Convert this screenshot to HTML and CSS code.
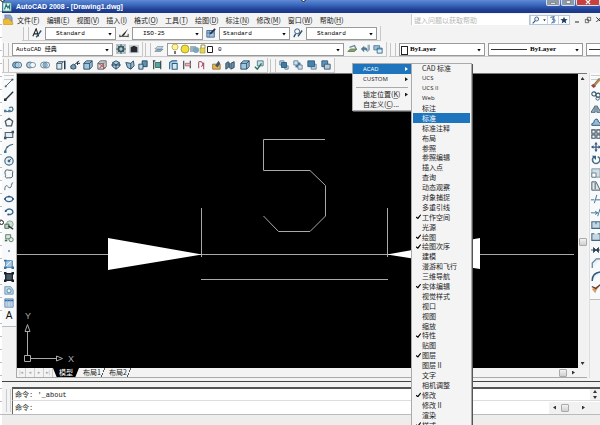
FILE: index.html
```
<!DOCTYPE html>
<html lang="zh-CN">
<head>
<meta charset="utf-8">
<title>AutoCAD 2008 - [Drawing1.dwg]</title>
<link rel="stylesheet" href="styles.css">
</head>
<body>
<svg class="defs" aria-hidden="true">
  <symbol id="grad" viewBox="0 0 12 12"><path d="M1 1h7v7H1z" fill="#5d94bd" stroke="#26516f"/><path d="M4 5h7v6H4z" fill="#b9c9d4" stroke="#26516f"/></symbol>
  <symbol id="cube" viewBox="0 0 12 12"><path d="M1 4l3-3h7v7l-3 3H1z" fill="#9fc6df" stroke="#1d3c55"/><path d="M1 4h7v7M8 4l3-3" fill="none" stroke="#1d3c55"/></symbol>
  <symbol id="hexcube" viewBox="0 0 12 12"><path d="M6 1l4 2v5l-4 3-4-3V3z" fill="#a9cbe0" stroke="#1d3c55"/><path d="M2 3l4 3 4-3M6 6v5M0 6h12" fill="none" stroke="#1d3c55"/></symbol>
  <symbol id="layers" viewBox="0 0 12 12"><path d="M1 9l3-3h7l-3 3z" fill="#8fa8ba" stroke="#587387" stroke-width=".6"/><path d="M1 6l3-3h7l-3 3z" fill="#c4d6e2" stroke="#587387" stroke-width=".6"/></symbol>
  <symbol id="rings" viewBox="0 0 12 12"><rect x=".7" y="2.5" width="8" height="7" rx="3.5" fill="#8db9d5" stroke="#315a78"/><rect x="3.5" y="2.5" width="8" height="7" rx="3.5" fill="#c1dcec" fill-opacity=".6" stroke="#315a78"/></symbol>
</svg>

<div class="app">
  <header class="title">
    <svg class="icon" viewBox="0 0 12 12"><path d="M1 1h10v10H1z" fill="#e9f3ef" stroke="#3d8a83"/><path d="M3 9l2-6 2 4 2-3v5" fill="none" stroke="#217a72" stroke-width="1.4"/></svg>
    <h1>AutoCAD 2008 - [Drawing1.dwg]</h1>
    <div class="wbtns">
      <button aria-label="最小化"><svg viewBox="0 0 12 6"><path d="M3 3h6v2H3z" fill="#fff" stroke="#555" stroke-width=".6"/></svg></button>
      <button aria-label="还原"><svg viewBox="0 0 12 6"><path d="M4 1h5v3H4z" fill="#fff" stroke="#555" stroke-width=".6"/></svg></button>
      <button class="close" aria-label="关闭"><svg viewBox="0 0 12 6"><path d="M3.500 0l5 5M8.500 0l-5 5" stroke="#fff" stroke-width="1.500"/></svg></button>
    </div>
  </header>

  <div class="menubar">
    <svg class="icon" viewBox="0 0 12 12"><path d="M2 1h6l2 3v5H2z" fill="#8ba5ca" stroke="#52719c" stroke-width=".6"/><path d="M0 6l6-1 5 5-1 2H1z" fill="#edbb35" stroke="#c08b1d" stroke-width=".6"/></svg>
    <nav>
      <a href="#">文件(<u>F</u>)</a><a href="#">编辑(<u>E</u>)</a><a href="#">视图(<u>V</u>)</a><a href="#">插入(<u>I</u>)</a><a href="#">格式(<u>O</u>)</a><a href="#">工具(<u>T</u>)</a><a href="#">绘图(<u>D</u>)</a><a href="#">标注(<u>N</u>)</a><a href="#">修改(<u>M</u>)</a><a href="#">窗口(<u>W</u>)</a><a href="#">帮助(<u>H</u>)</a>
    </nav>
    <input class="ask" type="text" placeholder="键入问题以获取帮助" aria-label="键入问题以获取帮助">
    <div class="help">
      <button aria-label="搜索"><svg viewBox="0 0 12 12"><circle cx="7" cy="4.500" r="3" fill="#e0edf8" stroke="#2d557f" stroke-width="1.200"/><path d="M5 7l-4 4" stroke="#2d557f" stroke-width="1.800"/></svg></button>
      <button class="thin" aria-label="搜索选项"><svg viewBox="0 0 6 12"><path d="M1 5h4L3 8z" fill="#333"/></svg></button>
      <button aria-label="通讯中心"><svg viewBox="0 0 12 12"><path d="M2 2l6-1-3 4 3 1-4 5" fill="none" stroke="#34608f" stroke-width="1.500"/><path d="M7 3q4 3 1 7H4" fill="none" stroke="#5d87af" stroke-width="1.500"/></svg></button>
      <button aria-label="收藏夹"><svg viewBox="0 0 12 12"><path d="M6 1l1.500 3.500 4 .2-3 2.500 1 4L6 9l-3.500 2.200 1-4-3-2.500 4-.2z" fill="#1e3f69"/></svg></button>
    </div>
    <div class="docbtns">
      <button aria-label="最小化图形"><svg viewBox="0 0 12 12"><path d="M3 9h6" stroke="#333" stroke-width="1.600"/></svg></button>
      <button aria-label="还原图形"><svg viewBox="0 0 12 12"><path d="M5 2h5v5H5zM2 5h5v5H2z" fill="#f4f4f4" stroke="#333"/></svg></button>
      <button aria-label="关闭图形"><svg viewBox="0 0 12 12"><path d="M2 2l7 7M9 2L2 9" stroke="#333" stroke-width="1.500"/></svg></button>
    </div>
  </div>

  <div class="row row1">
    <div class="bar styles-bar">
      <button class="ib" aria-label="文字样式"><svg viewBox="0 0 12 12"><path d="M1 10l4-9 3 9M2.500 7H7" fill="none" stroke="#222" stroke-width="1.300"/><path d="M11 3L6 10l-1 1" stroke="#2d5873" stroke-width="1.800"/></svg></button>
      <span class="combo w-a"><select aria-label="文字样式"><option>Standard</option></select></span>
      <button class="ib" aria-label="标注样式"><svg viewBox="0 0 12 12"><path d="M1 10h10M1 8v3M11 7v4" stroke="#222"/><path d="M11 1L4 8l-1 2 3-1z" fill="#222"/></svg></button>
      <span class="combo w-a"><select aria-label="标注样式"><option>ISO-25</option></select></span>
      <button class="ib" aria-label="表格样式"><svg viewBox="0 0 12 12"><path d="M1 3h9v8H1z" fill="#a6c3df" stroke="#365f91"/><path d="M1 6h9M4 3v8" stroke="#365f91" stroke-width=".7"/><path d="M11 1L5 7" stroke="#1f3244" stroke-width="2"/></svg></button>
      <span class="combo w-a near"><select aria-label="表格样式"><option>Standard</option></select></span>
      <button class="ib" aria-label="多重引线样式"><svg viewBox="0 0 12 12"><circle cx="5" cy="4" r="3" fill="none" stroke="#365f82" stroke-width="1.200"/><path d="M3 7l-2 4M11 3L6 10" stroke="#294c68" stroke-width="1.600"/></svg></button>
      <span class="combo w-a"><select aria-label="多重引线样式"><option>Standard</option></select></span>
    </div>
  </div>

  <div class="row row2">
    <div class="bar workspace">
      <span class="combo w-w near"><select aria-label="工作空间"><option>AutoCAD 经典</option></select></span>
      <button class="ib" aria-label="工作空间设置"><svg viewBox="0 0 12 12"><path d="M0 0h12v12H0z" fill="#b6c6ca"/><circle cx="6" cy="6" r="3" fill="none" stroke="#36545e" stroke-width="2"/><path d="M6 0v3M6 9v3M0 6h3M9 6h3M2 2l2 2M8 8l2 2M10 2L8 4M4 8l-2 2" stroke="#36545e"/></svg></button>
      <button class="ib" aria-label="我的工作空间"><svg viewBox="0 0 12 12"><path d="M0 1h12v10H0z" fill="#ccd1d4"/><path d="M2 4l4-2 4 2v6H2z" fill="#252b33"/></svg></button>
    </div>
    <div class="bar layerbar">
      <button class="ib" aria-label="图层特性管理器"><svg><use href="#layers"/></svg></button>
      <span class="combo w-l">
        <svg class="lstate" viewBox="0 0 44 12"><circle cx="5" cy="4" r="3" fill="#fff49a" stroke="#ad9c34" stroke-width=".7"/><path d="M4 8h2v3H4z" fill="#777"/><circle cx="15" cy="6" r="4" fill="#f1de3c" stroke="#99912d" stroke-width=".8"/><path d="M20 3h6v6h-6z" fill="#a1b3b9"/><circle cx="26" cy="7" r="3" fill="#78a6bf"/><path d="M31 5V2h4v3" fill="none" stroke="#928f3e"/><path d="M30 5h5v5h-5z" fill="#e8d44b" stroke="#928f3e" stroke-width=".6"/><path d="M37.500 3.500h5v6h-5z" fill="#fff" stroke="#222"/></svg>
        <select aria-label="图层"><option>0</option></select></span>
      <button class="ib" aria-label="置为当前图层"><svg viewBox="0 0 12 12"><path d="M1 9l3-3h8l-3 3z" fill="#84a566" stroke="#637b55"/><path d="M3 4l6-2 2 4" fill="none" stroke="#6b8b98" stroke-width="1.600"/></svg></button>
      <button class="ib" aria-label="上一个图层"><svg viewBox="0 0 12 12"><path d="M5 2L1 6l4 4V7q3 0 4 3 1-6-4-6z" fill="#517b98"/><path d="M9 1v9l3-3V1z" fill="#9eafb9"/></svg></button>
      <button class="ib" aria-label="图层状态管理器"><svg viewBox="0 0 12 12"><path d="M1 2h7v5H1z" fill="#9bc2db" stroke="#447391"/><path d="M5 5h6v6H5z" fill="#deedf5" stroke="#286389"/><path d="M5 6h6" stroke="#286389"/></svg></button>
    </div>
    <div class="bar props">
      <span class="combo w-c swatch"><select aria-label="颜色"><option>ByLayer</option></select></span>
      <span class="combo w-t line"><select aria-label="线型"><option>ByLayer</option></select></span>
      <span class="combo w-x line"><select aria-label="线宽"><option></option></select></span>
    </div>
  </div>

  <div class="row row3">
    <div class="bar">
      <div class="grp g3">
        <button class="ib" aria-label="并集"><svg><use href="#rings"/></svg></button>
        <button class="ib" aria-label="差集"><svg viewBox="0 0 12 12"><rect x=".7" y="2.500" width="8" height="7" rx="3.500" fill="#b1d3e7" stroke="#315a78"/><rect x="4.500" y="3" width="7" height="6" rx="3" fill="#f5f5f5" stroke="#6c879a"/></svg></button>
        <button class="ib" aria-label="交集"><svg viewBox="0 0 12 12"><rect x=".7" y="2.500" width="8" height="7" rx="3.500" fill="none" stroke="#55758b"/><rect x="3.500" y="2.500" width="8" height="7" rx="3.500" fill="none" stroke="#55758b"/><ellipse cx="6" cy="6" rx="2" ry="3" fill="#75abd0"/></svg></button>
      </div>
      <div class="grp g8">
        <button class="ib" aria-label="拉伸面"><svg viewBox="0 0 12 12"><path d="M1 4h6v7H1zM1 4l2-2h6L7 4" fill="#d6e5ee" stroke="#1d3c55"/><path d="M10.500 1v10" stroke="#1d3c55" stroke-width="1.800"/></svg></button>
        <button class="ib" aria-label="移动面"><svg viewBox="0 0 12 12"><path d="M1 7l3-2 3 2v3l-3 1-3-1z" fill="#789db5" stroke="#1d3c55"/><path d="M5 6l6-5M8 4h4M9 2v4" stroke="#263846" stroke-width="1.200"/></svg></button>
        <button class="ib" aria-label="偏移面"><svg><use href="#cube"/></svg></button>
        <button class="ib" aria-label="删除面"><svg viewBox="0 0 12 12"><path d="M1 4l3-3h7v7l-3 3H1zM1 4h7v7" fill="#dbd9dc" stroke="#3f4f5e"/><path d="M2 4l8 6M9 3l-6 7" stroke="#c05b57" stroke-width="1.300"/></svg></button>
        <button class="ib" aria-label="旋转面"><svg><use href="#hexcube"/></svg></button>
        <button class="ib" aria-label="倾斜面"><svg viewBox="0 0 12 12"><path d="M1 3l6 1v7L3 9zM7 4l3-3 1 6-4 4" fill="#97bcd4" stroke="#1d3c55"/></svg></button>
        <button class="ib" aria-label="复制面"><svg viewBox="0 0 12 12"><path d="M5 1h6v7H5z" fill="#618faf" stroke="#1d3c55"/><path d="M1 5h5v6H1z" fill="#b8d8e9" stroke="#1d3c55"/></svg></button>
        <button class="ib" aria-label="着色面"><svg viewBox="0 0 12 12"><path d="M4 3h6v6H4z" fill="#54a69a" stroke="#296260"/><path d="M2 1v10M1 1h3M10.500 1v10" stroke="#303e42" stroke-width="1.300"/></svg></button>
      </div>
      <div class="grp g7">
        <button class="ib" aria-label="复制边"><svg viewBox="0 0 12 12"><path d="M2 11V3l3-2h6M5 4h6v7H5z" fill="#d8e7f0" stroke="#246189" stroke-width="1.300"/></svg></button>
        <button class="ib" aria-label="着色边"><svg viewBox="0 0 12 12"><path d="M2 1v10M10 1v9" stroke="#485961" stroke-width="1.500"/><path d="M4 4h6v3H4z" fill="#edb7bd" stroke="#a2636b"/></svg></button>
        <button class="ib" aria-label="压印"><svg viewBox="0 0 12 12"><path d="M2 10V4q0-3 3-2 4 3 0 6M8 3v8" fill="none" stroke="#a2526a" stroke-width="1.300"/></svg></button>
        <button class="ib" aria-label="清除"><svg viewBox="0 0 12 12"><path d="M2 5h9v6H2z" fill="#e6b556" stroke="#8b6a31"/><path d="M5 7L9 1l2 3-3 5z" fill="#42576a"/></svg></button>
        <button class="ib" aria-label="分割"><svg viewBox="0 0 12 12"><path d="M1 4l3-2v7l-3 2zM7 4l4-2v7l-4 2z" fill="#6b8da5" stroke="#1d3c55"/><path d="M5.500 3v7" stroke="#1d3c55"/></svg></button>
        <button class="ib" aria-label="抽壳"><svg><use href="#cube"/></svg></button>
        <button class="ib" aria-label="选中"><svg viewBox="0 0 12 12"><path d="M4 1h7v6H4z" fill="#c8dfeb" stroke="#427285"/><path d="M1 8l3 3 5-7" fill="none" stroke="#26785b" stroke-width="1.700"/></svg></button>
      </div>
    </div>
    <div class="bar order">
      <div class="grp g4">
        <button class="ib" aria-label="前置"><svg viewBox="0 0 12 12"><path d="M1 1h5v5H1zM7 7h4v4H7z" fill="#d3e1e8" stroke="#597c94"/><path d="M3 3h6v6H3z" fill="#3e7daa" stroke="#285778"/></svg></button>
        <button class="ib" aria-label="后置"><svg viewBox="0 0 12 12"><path d="M3 3h6v6H3z" fill="#3e7daa"/><path d="M1 1h5v5H1zM6 6h5v5H6z" fill="#d3e1e8" stroke="#597c94"/></svg></button>
        <button class="ib" aria-label="置于对象之上"><svg viewBox="0 0 12 12"><path d="M5 5h6v6H5z" fill="#c8d8e3" stroke="#597c94"/><path d="M1 1h8v7H1z" fill="#4583ad" stroke="#285778"/></svg></button>
        <button class="ib" aria-label="置于对象之下"><svg><use href="#grad"/></svg></button>
      </div>
    </div>
  </div>

  <main class="work">
    <aside class="palette draw">
      <div class="tools">
        <button class="ib" aria-label="直线"><svg viewBox="0 0 12 12"><path d="M2 10l8-8" stroke="#56656f" stroke-width="1.200"/><path d="M1 9h2v2H1zM9 1h2v2H9z" fill="#3c5768"/></svg></button>
        <button class="ib" aria-label="构造线"><svg viewBox="0 0 12 12"><path d="M1 11L11 1" stroke="#25303b" stroke-width="1.600"/><path d="M0 9h3v3H0z" fill="#25303b"/></svg></button>
        <button class="ib" aria-label="多段线"><svg viewBox="0 0 12 12"><path d="M1 9h8q3-2 1-5-2-1-4 1" fill="none" stroke="#477596" stroke-width="1.400"/><path d="M0 7h3v3H0zM5 7h3v3H5z" fill="#517b99"/></svg></button>
        <button class="ib" aria-label="正多边形"><svg viewBox="0 0 12 12"><path d="M6 1.500l4.500 3.500L9 10.500H3L1.500 5z" fill="none" stroke="#485764" stroke-width="1.500"/></svg></button>
        <button class="ib" aria-label="矩形"><svg viewBox="0 0 12 12"><path d="M1.500 3h9v6h-9z" fill="#e5edf4" stroke="#52616c" stroke-width="1.300"/><path d="M0 8h3v3H0zM9 1h3v3H9z" fill="#3a566a"/></svg></button>
        <button class="ib" aria-label="圆弧"><svg viewBox="0 0 12 12"><path d="M1.500 11Q2 3 11 1.500" fill="none" stroke="#496880" stroke-width="1.300"/><path d="M0 9h3v3H0zM3 4h2v2H3z" fill="#49728c"/></svg></button>
        <button class="ib" aria-label="圆"><svg viewBox="0 0 12 12"><circle cx="6" cy="6" r="5" fill="#e9f1f7" stroke="#49687f" stroke-width="1.400"/><path d="M6 6l3-3M5 5h2v2H5z" stroke="#285b81" fill="#285b81"/></svg></button>
        <button class="ib" aria-label="修订云线"><svg viewBox="0 0 12 12"><path d="M2 1.500q2-1 4 0 4-1 4.500 1.500 0 2-.5 3 1 3-.5 4-2 1-4 .5-3 1-4-1 1-2 0-3-1-3 .5-5z" fill="none" stroke="#50616d" stroke-width="1.200"/></svg></button>
        <button class="ib" aria-label="样条曲线"><svg viewBox="0 0 12 12"><path d="M1 11q0-7 3-5 4 5 5-1 0-3 2-3" fill="none" stroke="#66747e" stroke-width="1.200"/></svg></button>
        <button class="ib" aria-label="椭圆"><svg viewBox="0 0 12 12"><ellipse cx="6" cy="6" rx="4.500" ry="3" fill="none" stroke="#3a648a" stroke-width="1.500"/><path d="M0 5h2v2H0zM10 5h2v2h-2zM5 2h2v2H5z" fill="#294f73"/></svg></button>
        <button class="ib" aria-label="椭圆弧"><svg viewBox="0 0 12 12"><path d="M2 5q2-4 7-2 4 4-1 6H5" fill="none" stroke="#3d698e" stroke-width="1.600"/><path d="M1 4h2v2H1zM4 8h2v2H4z" fill="#294f73"/></svg></button>
        <button class="ib" aria-label="插入块"><svg viewBox="0 0 12 12"><circle cx="7" cy="5" r="4" fill="#d0e2d7" stroke="#7c9a85"/><path d="M1 5h5v5H1z" fill="#c2d2c9" stroke="#3d5948"/><path d="M5 7l6 4" stroke="#2f453a" stroke-width="1.800"/></svg></button>
        <button class="ib" aria-label="创建块"><svg viewBox="0 0 12 12"><path d="M2 2h6v5H2z" fill="#d5e6d9" stroke="#48705c"/><circle cx="8.500" cy="8" r="2.500" fill="#e9f2ea" stroke="#48705c"/><path d="M1 8h3v2H1z" fill="#456b56"/></svg></button>
        <button class="ib" aria-label="点"><svg viewBox="0 0 12 12"><path d="M5 5h2v2H5z" fill="#3d6d98"/></svg></button>
        <button class="ib" aria-label="图案填充"><svg viewBox="0 0 12 12"><path d="M2 2h8v8H2z" fill="#a2c8e5" stroke="#346f9c"/><path d="M2 9l7-7" stroke="#fff"/><path d="M0 1h3v2H0zM9 9h3v3H9zM0 9h3v3H0z" fill="#3d739b"/></svg></button>
        <button class="ib" aria-label="渐变色"><svg viewBox="0 0 12 12"><path d="M2 2h8v8H2z" fill="#4a5863" stroke="#18212a" stroke-width="1.500"/><path d="M0 0h3v3H0zM9 0h3v3H9zM0 9h3v3H0zM9 9h3v3H9z" fill="#18212a"/></svg></button>
        <button class="ib" aria-label="面域"><svg viewBox="0 0 12 12"><path d="M1 2h7l3 4v5H1z" fill="#bdd9ea" stroke="#618caa"/><circle cx="6" cy="7" r="2.500" fill="#e8f3f8" stroke="#41789e"/></svg></button>
        <button class="ib" aria-label="表格"><svg viewBox="0 0 12 12"><path d="M1 1h10v10H1z" fill="#d0e3f2" stroke="#5d7fa5"/><path d="M1 3h10" stroke="#386fa8" stroke-width="2"/><path d="M1 6h10M1 8.500h10M4 2v9M8 2v9" stroke="#8cabc8" stroke-width=".6"/></svg></button>
        <button class="ib letter" aria-label="多行文字">A</button>
      </div>
    </aside>

    <section class="viewport">
      <svg class="model" viewBox="17 74 561 294" preserveAspectRatio="xMinYMin slice">
        <g fill="none" stroke="#a9a9a9">
          <path d="M325 139.500h-61.500v31H310l15.500 15V216L310 231.500h-31.500L263.500 216"/>
          <path d="M201.500 208v49M387.500 208v49M201 279.500h187M17 254.500h557"/>
          <path d="M24.500 355.500h6v6h-6zM27.500 355v-23M25 331.500h5l-2.500-7zM31 358.500h25M56.500 356v5l6-2.500z"/>
        </g>
        <path d="M108 238l94 16.500-94 15.500zM387 254.500l93-16.500v31z" fill="#fff"/>
        <g class="axis"><text x="68" y="362">X</text><text x="25" y="319">Y</text></g>
      </svg>
      <div class="vscroll"><i class="up"></i><i class="thumb"></i><i class="down"></i></div>
      <div class="tabs">
        <div class="navs"><button aria-label="第一个">|◂</button><button aria-label="上一个">◂</button><button aria-label="下一个">▸</button><button aria-label="最后一个">▸|</button></div>
        <button class="tab on">模型</button><button class="tab">布局1</button><button class="tab">布局2</button>
        <div class="hscroll"><i class="thumb"></i><i class="right"></i></div>
      </div>
    </section>

    <aside class="palette modify">
      <div class="tools">
        <button class="ib" aria-label="删除"><svg viewBox="0 0 12 12"><path d="M1 10l3 1 8-9-2-2z" fill="#b58b51"/><path d="M0 9l3 3 3-2-3-3z" fill="#9c4546"/><path d="M4 7L10 0" stroke="#67714b"/></svg></button>
        <button class="ib" aria-label="复制"><svg viewBox="0 0 12 12"><circle cx="3.500" cy="3.500" r="2.500" fill="none" stroke="#36576f" stroke-width="1.300"/><circle cx="8.500" cy="5" r="2.500" fill="none" stroke="#36576f" stroke-width="1.300"/><circle cx="8" cy="9" r="2" fill="none" stroke="#36576f"/></svg></button>
        <button class="ib" aria-label="镜像"><svg viewBox="0 0 12 12"><path d="M5 2v8H0zM7 2v8h5z" fill="#9fb5c4" stroke="#3b5566"/></svg></button>
        <button class="ib" aria-label="偏移"><svg viewBox="0 0 12 12"><path d="M1 10V8q3 0 3-4 4-4 5 2l3 2v2z" fill="#98bcd8" stroke="#345f82" stroke-width="1.200"/></svg></button>
        <button class="ib" aria-label="阵列"><svg viewBox="0 0 12 12"><path d="M1 1h4v4H1zM7 1h4v4H7zM1 7h4v4H1zM7 7h4v4H7z" fill="none" stroke="#3c5261" stroke-width="1.300"/></svg></button>
        <button class="ib" aria-label="移动"><svg viewBox="0 0 12 12"><path d="M6 1v10M1 6h10" stroke="#385c83" stroke-width="1.500"/><path d="M6 0l2 3H4zM6 12l2-3H4zM0 6l3-2v4zM12 6L9 4v4z" fill="#385c83"/></svg></button>
        <button class="ib" aria-label="旋转"><svg viewBox="0 0 12 12"><path d="M4 2q-4 3-1 7 4 3 7-1 2-4-2-6" fill="none" stroke="#496c86" stroke-width="1.800"/><path d="M1 1h5v5z" fill="#355d7b"/></svg></button>
        <button class="ib" aria-label="缩放"><svg viewBox="0 0 12 12"><path d="M1 1h10v10H1z" fill="#cfdde6" stroke="#718b9c"/><path d="M1 6h5v5H1z" fill="#fff" stroke="#567488"/></svg></button>
        <button class="ib" aria-label="拉伸"><svg viewBox="0 0 12 12"><path d="M1 1h5l5 10H1zM5 2v8" fill="#e0e7ea" stroke="#516570" stroke-width="1.200"/></svg></button>
        <button class="ib" aria-label="修剪"><svg viewBox="0 0 12 12"><path d="M0 7h4M6 7h6M7 1L4 11" stroke="#477899" stroke-width="1.200"/></svg></button>
        <button class="ib" aria-label="延伸"><svg viewBox="0 0 12 12"><path d="M0 7h8M11 2L8 11M5 5l3 2-3 2" fill="none" stroke="#477899" stroke-width="1.200"/></svg></button>
        <button class="ib" aria-label="打断于点"><svg viewBox="0 0 12 12"><path d="M1 2h10v8H1zM6 2v3" fill="#c5d8e6" stroke="#48677d" stroke-width="1.300"/></svg></button>
        <button class="ib" aria-label="打断"><svg viewBox="0 0 12 12"><path d="M4 2H1v8h10V2H8" fill="#c5d8e6" stroke="#48677d" stroke-width="1.300"/></svg></button>
        <button class="ib" aria-label="合并"><svg viewBox="0 0 12 12"><path d="M0 6h4M8 6h4M3 3l3 3-3 3zM9 3L6 6l3 3z" fill="#2f4351" stroke="#2f4351"/></svg></button>
        <button class="ib" aria-label="倒角"><svg viewBox="0 0 12 12"><path d="M1.500 12V6l5-5H12" fill="#e8f1f6" stroke="#60859d" stroke-width="1.500"/></svg></button>
        <button class="ib" aria-label="圆角"><svg viewBox="0 0 12 12"><path d="M1.500 12Q1 2 12 1" fill="#e8f1f6" stroke="#345a7a" stroke-width="1.800"/></svg></button>
        <button class="ib" aria-label="分解"><svg viewBox="0 0 12 12"><path d="M1 6l4 5 2-4 4-6-6 3z" fill="#db9c67"/><path d="M5 6l6-5M1 3l4 2" stroke="#593b33" stroke-width="1.500"/></svg></button>
      </div>
    </aside>
  </main>

  <section class="command">
    <div class="history"><output>命令: '_about</output><div class="vmini"><i class="up"></i><i class="down"></i></div></div>
    <div class="prompt"><label for="cmd">命令:</label><input id="cmd" type="text"><div class="hmini"><i class="left"></i><i class="thumb"></i><i class="right"></i></div></div>
  </section>
  <footer class="status"></footer>
</div>

<div class="menu context">
  <button class="on latin sub">ACAD</button>
  <button class="latin sub">CUSTOM</button>
  <hr>
  <button class="sub">锁定位置(<u>K</u>)</button>
  <button>自定义(<u>C</u>)...</button>
</div>
<div class="menu list">
  <button>CAD 标准</button><button class="latin">UCS</button><button class="latin">UCS II</button><button class="latin">Web</button><button>标注</button><button class="on">标准</button><button>标准注释</button><button>布局</button><button>参照</button><button>参照编辑</button><button>插入点</button><button>查询</button><button>动态观察</button><button>对象捕捉</button><button>多重引线</button><button class="ck">工作空间</button><button>光源</button><button class="ck">绘图</button><button class="ck">绘图次序</button><button>建模</button><button>漫游和飞行</button><button>三维导航</button><button class="ck">实体编辑</button><button>视觉样式</button><button>视口</button><button>视图</button><button>缩放</button><button class="ck">特性</button><button>贴图</button><button class="ck">图层</button><button>图层 II</button><button>文字</button><button>相机调整</button><button class="ck">修改</button><button>修改 II</button><button>渲染</button><button class="ck">样式</button>
</div>
<i class="handle top"></i><i class="handle corner"></i><i class="handle side"></i>
</body>
</html>
```
FILE: styles.css
```
* { box-sizing: border-box; }
html, body { height: 100%; }
body {
  margin: 0;
  padding-left: 2px;
  overflow: hidden;
  position: relative;
  font: 7px/10px "Noto Sans CJK SC", "Liberation Sans", sans-serif;
  color: #1c1c1c;
  background: repeating-linear-gradient(#fff 0 11px, #bbb 11px 12px, #fff 12px 13px);
}
button, input, select { font: inherit; color: inherit; border: 0; margin: 0; padding: 0; background: none; border-radius: 0; outline: 0; }
a { color: inherit; text-decoration: none; }
i { display: block; }
.defs { position: absolute; width: 0; height: 0; }
.app { height: 100vh; display: flex; flex-direction: column; background: #f3f3f3; }
.icon { width: 10px; height: 10px; flex: none; }

.title { height: 13px; flex: none; display: flex; align-items: center; gap: 4px; background: linear-gradient(#5f8ad4, #4170c4 30%, #1f3f93 75%, #1b3786); }
.title h1 { margin: 0; font: bold 7px/11px "Liberation Sans", sans-serif; color: #fff; flex: 1; white-space: nowrap; }
.wbtns { display: flex; align-self: flex-start; gap: 1px; }
.wbtns button { width: 14px; height: 6px; background: #8e99ac; border: solid #d9e0ee; border-width: 0 1px 1px; border-radius: 0 0 2px 2px; line-height: 0; }
.wbtns .close { width: 24px; background: #c9413d; }
.wbtns svg { height: 5px; width: 10px; }

.menubar { height: 13px; flex: none; display: flex; align-items: center; padding-left: 1px; }
.menubar nav { display: flex; gap: 7px; padding-left: 3px; flex: 1; white-space: nowrap; }
.menubar .icon { width: 11px; height: 11px; }
u { text-underline-offset: 1px; text-decoration-thickness: 1px; text-decoration-color: #888; }
.ask { width: 118px; height: 11px; background: #fff; padding: 0 2px; border-left: 1px solid #ccc; }
.ask::placeholder { color: #b7b7b7; opacity: 1; }
.help { display: flex; height: 10px; background: #fff; border: 1px solid #b8c6da; }
.help button { width: 11px; height: 8px; line-height: 0; border-left: 1px solid #c8d3e2; }
.help .thin { width: 6px; border: 0; }
.help svg, .docbtns svg { height: 8px; width: 8px; }
.help .thin svg { width: 5px; }
.docbtns { display: flex; gap: 3px; padding-left: 3px; margin-right: -3px; }
.docbtns button { width: 8px; height: 8px; line-height: 0; }

.row { display: flex; flex: none; height: 16px; gap: 3px; }
.row1 { padding-left: 20px; }
.bar { display: flex; align-items: center; height: 15px; border: solid #c9c9c9; border-width: 0 1px 1px 0; background: #f6f6f6; }
.bar::before { content: ""; width: 4px; height: 13px; flex: none; border: solid #c4c4c4; border-width: 0 1px; margin-left: 1px; }
.ib { width: 10px; height: 10px; flex: none; line-height: 0; }
.ib svg { width: 10px; height: 10px; display: block; }
.combo { position: relative; display: flex; height: 13px; background: #fff; border: 1px solid #999; flex: none; }
.combo select { appearance: none; width: 100%; padding: 0 0 0 10px; font: 6px/11px "Liberation Mono", "Noto Sans CJK SC", monospace; color: #000; }
.combo::after { content: ""; position: absolute; right: 3px; top: 5px; width: 4px; height: 3px; background: #000; clip-path: polygon(0 0, 100% 0, 50% 100%); }
.combo.near select { padding-left: 3px; }
.styles-bar, .workspace, .layerbar { gap: 3px; padding-right: 3px; }
.w-a { width: 71px; }
.row2 { gap: 1px; }
.w-w { width: 101px; }
.w-l { width: 177px; align-items: center; }
.lstate { width: 44px; height: 12px; flex: none; margin-left: 2px; }
.w-l select { padding-left: 4px; }
.props { gap: 3px; flex: 1; min-width: 0; overflow: hidden; border-right: 0; margin-left: 1px; }
.props select { font-family: "Liberation Serif", serif; font-weight: bold; font-size: 7px; }
.w-c { width: 86px; }
.w-t { width: 95px; }
.w-x { width: 86px; }
.swatch::before { content: ""; width: 5px; height: 7px; border: 1px solid #222; margin: 2px 0 0 1px; flex: none; }
.swatch select { padding-left: 2px; }
.line::before { content: ""; width: 36px; height: 1px; background: #333; margin: 5px 0 0 2px; flex: none; }
.line select { padding-left: 3px; }
.row3 { height: 15px; gap: 1px; }
.row3 .bar { gap: 6px; padding-right: 3px; }
.row3 .bar::before { margin-right: -3px; }
.grp { display: flex; justify-content: space-between; flex: none; }
.g3 { width: 38px; }
.g8 { width: 106px; }
.g7 { width: 96px; }
.g4 { width: 52px; }

.work { flex: 1; min-height: 0; display: flex; }
.palette { flex: none; }
.palette .tools { display: flex; flex-direction: column; justify-content: space-between; align-items: center; background: #f8f9fa; border-bottom: 1px solid #bdbdbd; padding: 9px 0 5px; }
.palette .tools::before { content: ""; width: 10px; height: 3px; flex: none; margin: -7px 0 -5px; border: solid #ccc; border-width: 1px 0; }
.draw { width: 15px; border-right: 1px solid #aaa; }
.draw .tools { height: 254px; }
.modify { width: 11px; margin-left: 2px; overflow: hidden; border-left: 1px solid #ddd; }
.modify .tools { height: 227px; align-items: flex-start; padding-left: 1px; }
.letter { font: 10px/10px "Liberation Sans", sans-serif; color: #111; }
.viewport { flex: 1; min-width: 0; display: grid; grid-template: minmax(0, 1fr) 10px / minmax(0, 1fr) 9px; border-top: 1px solid #777; }
.model { width: 100%; height: 100%; background: #000; display: block; }
.axis { font: 9px "Liberation Sans", sans-serif; fill: #aaa; }
.vscroll { display: flex; flex-direction: column; align-items: center; padding: 3px 0; background: #f1f1f1; }
.vscroll .thumb { margin: 158px 0 auto; }
.thumb { width: 8px; height: 8px; background: linear-gradient(#f2f2f2, #cfcfcf); border: 1px solid #aaa; border-radius: 1px; }
.up, .down { width: 4px; height: 3px; background: #333; }
.up { clip-path: polygon(50% 0, 100% 100%, 0 100%); }
.down { clip-path: polygon(0 0, 100% 0, 50% 100%); }
.left, .right { width: 3px; height: 4px; background: #333; }
.left { clip-path: polygon(100% 0, 100% 100%, 0 50%); }
.right { clip-path: polygon(0 0, 100% 50%, 0 100%); }
.tabs { grid-column: 1 / -1; display: flex; height: 10px; border-bottom: 1px solid #aaa; }
.navs { display: flex; }
.navs button { width: 9px; font: 5px/9px "DejaVu Sans", sans-serif; color: #aaa; border-right: 1px solid #ccc; }
.tab { width: 26px; line-height: 9px; background: linear-gradient(110deg, transparent 0 86%, #555 86% 89%, transparent 89%); }
.tab.on { color: #fff; background: #000; clip-path: polygon(0 0, 100% 0, 86% 100%, 14% 100%); }
.hscroll { flex: 1; display: flex; justify-content: flex-end; align-items: center; gap: 5px; padding-right: 12px; }

.command { flex: none; margin-top: 3px; border-top: 1px solid #444; padding: 5px 0 0 10px; font-family: "Liberation Mono", "Noto Sans CJK SC", monospace; position: relative; }
.command::before { content: ""; position: absolute; left: 4px; top: 7px; width: 3px; bottom: 2px; border: solid #ccc; border-width: 0 1px; }
.history, .prompt { display: flex; background: #fff; padding-left: 2px; height: 13px; align-items: center; border-left: 1px solid #666; }
.history { border-top: 2px solid #555; border-bottom: 1px solid #ddd; height: 14px; }
.history output { flex: 1; }
.vmini { width: 10px; height: 11px; display: flex; flex-direction: column; justify-content: space-between; padding: 1px 3px; background: #f1f1f1; }
.prompt input { flex: 1; min-width: 0; }
.hmini { display: flex; align-items: center; gap: 5px; padding: 0 15px 0 4px; height: 12px; background: #f1f1f1; }
.hmini .right { margin-left: 8px; }
.status { flex: none; height: 11px; background: #efecec; border-top: 1px solid #bbb; }

.menu { position: absolute; display: flex; flex-direction: column; background: #f4f4f4; border: 1px solid #aaa; box-shadow: 1px 1px 0 #555; }
.menu button { position: relative; flex: 1; min-height: 0; text-align: left; line-height: 9px; white-space: nowrap; padding-left: 10px; }
.menu .latin { font: 6px/9px "Open Sans", "Noto Sans CJK SC", sans-serif; }
.menu .on { background: #1f75bd; color: #fff; }
.menu hr { width: 90%; border: 0; border-top: 1px solid #aaa; margin: 2px auto; }
.context { left: 352px; top: 63px; width: 60px; height: 48px; }
.sub::after { content: ""; position: absolute; right: 3px; top: 3px; width: 3px; height: 4px; background: currentColor; clip-path: polygon(0 0, 100% 50%, 0 100%); }
.list { left: 411px; top: 63px; width: 61px; height: 368px; padding: 0 1px; }
.list button { padding-left: 9px; }
.ck::before { content: ""; position: absolute; left: 3px; top: 2px; width: 5px; height: 5px; background: #000; clip-path: polygon(0 45%, 35% 65%, 90% 0, 100% 20%, 40% 100%, 0 70%); }

.handle { position: absolute; width: 5px; height: 5px; border: 1px solid #222; border-radius: 50%; background: #fff; }
.handle.top { left: 301px; top: -3px; }
.handle.corner { left: 0; top: -3px; }
.handle.side { left: -1px; top: 220px; }
```
